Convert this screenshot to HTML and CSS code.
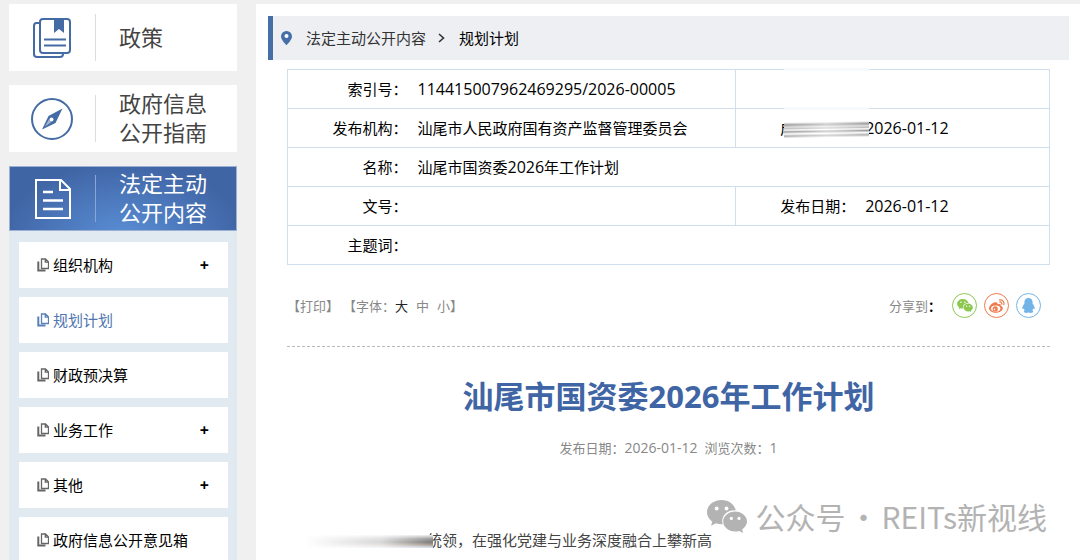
FILE: index.html
```html
<!DOCTYPE html>
<html lang="zh-CN">
<head>
    <meta charset="UTF-8">
    <meta name="viewport" content="width=device-width, initial-scale=1.0">
    <title>汕尾市国资委2026年工作计划</title>
    <link rel="stylesheet" href="styles.css">
</head>
<body>
    <svg class="sprite" aria-hidden="true">
        <symbol id="icon-copy" viewBox="0 0 12 14">
            <path d="M4.500 1h4l3 3v6.500h-7z M8.300 1v3.200h3.200" fill="none" stroke="currentColor" stroke-width="1.300"/>
            <path d="M1.300 3.500v9h7.200" fill="none" stroke="currentColor" stroke-width="2"/>
        </symbol>
        <symbol id="icon-wechat" viewBox="0 0 40 33">
            <path d="M14.500 0C6.500 0 0 5.400 0 12.200c0 3.900 2.100 7.200 5.300 9.500L4 25.800l5-2.500c1.800.500 3.500.900 5.500.900h1.200c-.300-1-.500-2-.500-3.100 0-6.200 5.600-10.900 12.400-10.900h1.200C27.400 4.200 21.500 0 14.500 0z"/>
            <path d="M40 21.600c0-5.500-5.500-10-11.900-10s-11.900 4.500-11.900 10 5.400 10 11.900 10c1.400 0 2.800-.300 4.100-.700l4 2.100-1.100-3.600c2.900-1.900 4.900-4.700 4.900-7.800z"/>
            <g fill="#fff"><circle cx="9.700" cy="8.500" r="1.900"/><circle cx="19.500" cy="8.500" r="1.900"/><circle cx="24.300" cy="18.400" r="1.600"/><circle cx="32" cy="18.400" r="1.600"/></g>
        </symbol>
    </svg>

    <div class="wrap">
        <aside class="side">
            <nav aria-label="信息公开">
                <a class="card" href="#">
                    <span class="card-icon">
                        <svg width="40" height="42" viewBox="0 0 40 42" fill="none" stroke="#456ba5" stroke-width="2">
                            <path d="M7 6H4.500Q2 6 2 9v28q0 3 3 3h23q3 0 3-3"/>
                            <rect x="8" y="2" width="30" height="34" rx="3" fill="#fff"/>
                            <path d="M22 2h10v14l-5-4-5 4z" fill="#456ba5" stroke="none"/>
                            <path d="M12 22.500h22M12 28.500h22"/>
                        </svg>
                    </span>
                    <span class="card-text">政策</span>
                </a>
                <a class="card" href="#">
                    <span class="card-icon">
                        <svg width="42" height="42" viewBox="0 0 42 42">
                            <circle cx="21" cy="21" r="20" fill="none" stroke="#456ba5" stroke-width="2"/>
                            <path d="M31.500 10.500L24.500 25 11 31.500 17.500 18z" fill="#456ba5"/>
                            <path d="M13.800 28.800l4-7.300 2.300 2.800z" fill="#fff" opacity=".5"/>
                            <circle cx="20.500" cy="21.500" r="2" fill="#fff"/>
                        </svg>
                    </span>
                    <span class="card-text">政府信息<br>公开指南</span>
                </a>
                <a class="card active" href="#">
                    <span class="card-icon">
                        <svg width="36" height="40" viewBox="0 0 36 40" fill="none" stroke="#fff" stroke-width="2">
                            <path d="M1 1h25l9 9v29H1z M25 1v10h10"/>
                            <path d="M8 13h10M8 21.500h20M8 30h20" stroke-width="2.500"/>
                        </svg>
                    </span>
                    <span class="card-text">法定主动<br>公开内容</span>
                </a>
                <ul class="sub-list">
                    <li><a href="#"><svg class="copy"><use href="#icon-copy"/></svg>组织机构</a><button aria-label="展开组织机构">+</button></li>
                    <li class="current"><a href="#"><svg class="copy"><use href="#icon-copy"/></svg>规划计划</a></li>
                    <li><a href="#"><svg class="copy"><use href="#icon-copy"/></svg>财政预决算</a></li>
                    <li><a href="#"><svg class="copy"><use href="#icon-copy"/></svg>业务工作</a><button aria-label="展开业务工作">+</button></li>
                    <li><a href="#"><svg class="copy"><use href="#icon-copy"/></svg>其他</a><button aria-label="展开其他">+</button></li>
                    <li><a href="#"><svg class="copy"><use href="#icon-copy"/></svg>政府信息公开意见箱</a></li>
                </ul>
            </nav>
        </aside>

        <main class="main">
            <nav class="crumb" aria-label="当前位置">
                <svg width="11" height="14" viewBox="0 0 11 14"><path d="M5.500 0A5.400 5.400 0 0 0 0 5.400C0 9 5.500 14 5.500 14S11 9 11 5.400A5.400 5.400 0 0 0 5.500 0z" fill="#466fa8"/><circle cx="5.500" cy="5" r="2" fill="#fff"/></svg>
                <a href="#">法定主动公开内容</a>
                <svg width="7" height="10" viewBox="0 0 7 10"><path d="M1 1l4.500 4L1 9" fill="none" stroke="#333" stroke-width="1.600"/></svg>
                <a class="here" href="#">规划计划</a>
            </nav>

            <div class="content">
                <table class="info">
                    <colgroup>
                        <col class="col-label"><col class="col-wide"><col class="col-label"><col>
                    </colgroup>
                    <tr>
                        <th>索引号：</th>
                        <td><span class="num">114415007962469295/2026-00005</span></td>
                        <th><span class="fade"></span></th>
                        <td></td>
                    </tr>
                    <tr>
                        <th>发布机构：</th>
                        <td>汕尾市人民政府国有资产监督管理委员会</td>
                        <th>成文日期：<span class="fade"></span><span class="smudge"></span></th>
                        <td><span class="num">2026-01-12</span></td>
                    </tr>
                    <tr>
                        <th>名称：</th>
                        <td colspan="3">汕尾市国资委<span class="num">2026</span>年工作计划</td>
                    </tr>
                    <tr>
                        <th>文号：</th>
                        <td></td>
                        <th>发布日期：</th>
                        <td><span class="num">2026-01-12</span></td>
                    </tr>
                    <tr>
                        <th>主题词：</th>
                        <td colspan="3"></td>
                    </tr>
                </table>

                <div class="tools">
                    <div class="tools-left">
                        <button>【打印】</button>
                        <span>【字体：<button class="on">大</button><button>中</button><button>小</button>】</span>
                    </div>
                    <div class="share">
                        <span>分享到<b>：</b></span>
                        <a class="wechat" href="#" aria-label="微信"><svg width="16" height="13"><use href="#icon-wechat"/></svg></a>
                        <a class="weibo" href="#" aria-label="微博">
                            <svg width="16" height="14" viewBox="0 0 16 14">
                                <path d="M6 3.200C3.500 3.500 0 6.800 0 9.300 0 12 3.300 13.800 6.800 13.800c4 0 7-2.200 7-4.500 0-1.500-1.200-2.200-2.200-2.500.500-1.600-.400-2.500-3-1.500C8.900 3.900 7.800 3 6 3.200z" fill="currentColor"/>
                                <ellipse cx="6.700" cy="9.600" rx="4.700" ry="3.100" fill="#fff"/>
                                <circle cx="6.200" cy="9.900" r="2.600" fill="currentColor"/>
                                <circle cx="5.500" cy="10.400" r=".8" fill="#fff"/>
                                <path d="M10.500.900c3-.500 5.100 2 4.300 4.700M10.700 3c1.400-.200 2.400.900 2 2.200" fill="none" stroke="currentColor" stroke-width="1.200" stroke-linecap="round"/>
                            </svg>
                        </a>
                        <a class="qq" href="#" aria-label="QQ">
                            <svg width="13" height="15" viewBox="0 0 13 15"><path d="M6.500 0C3.900 0 2.400 1.900 2.400 4.200v1.500C1.300 7.100.300 8.600.300 10.300c0 1 .500 1.300 1.500.100.200.800.500 1.400 1 1.900-.700.300-1 .700-1 1.200 0 1 1.300 1.400 2.800 1.400.9 0 1.500-.200 1.900-.600.400.400 1 .600 1.900.600 1.500 0 2.800-.4 2.800-1.400 0-.500-.3-.9-1-1.200.5-.5.800-1.100 1-1.900 1 1.200 1.500.900 1.500-.1 0-1.700-1-3.200-2.100-4.600V4.200C10.600 1.900 9.100 0 6.500 0z" fill="currentColor"/></svg>
                        </a>
                    </div>
                </div>

                <article>
                    <h1>汕尾市国资委2026年工作计划</h1>
                    <p class="meta">发布日期：<span class="meta-num">2026-01-12</span><span class="views">浏览次数：<span class="meta-num">1</span></span></p>
                    <p class="text"><span class="text-smudge"></span>统领，在强化党建与业务深度融合上攀新高</p>
                </article>
            </div>
        </main>
    </div>

    <div class="watermark">
        <svg width="40" height="33"><use href="#icon-wechat"/></svg>
        <span>公众号</span><span>·</span><span>REITs新视线</span>
    </div>
</body>
</html>
```
FILE: styles.css
```css
*{padding:0; margin:0; list-style:none; box-sizing:border-box;}
:root{
    --blue:#4065a5;
    --line:#cfdfee;
    --page:#f0f0f0;
}
body{
    background:var(--page); color:#000;
    font:15px/20px "Open Sans","Noto Sans CJK SC",sans-serif;
    height:100vh; overflow:hidden;
}
a{color:inherit; text-decoration:none;}
button{border:0; background:none; font:inherit; color:inherit; cursor:pointer;}
svg{display:block; flex:none;}
.sprite{position:absolute; width:0; height:0;}

.wrap{
    display:grid; grid-template-columns:228px 1fr;
    gap:19px; padding:4px 0 0 9px;
}

/* side */
.card{
    display:flex; align-items:center;
    height:67px; margin-bottom:14px;
    background:#fff; color:#444;
    font-size:22px; line-height:29px;
}
.card-icon{
    display:flex; align-items:center; justify-content:center;
    width:87px; height:47px;
    border-right:1px solid #ddd;
}
.card-text{padding:0 0 1px 23px;}
.card.active{
    height:65px; margin:0; border:1px solid #9bb0d3; color:#fff;
    background:radial-gradient(ellipse at 50% 110%,#5a8ed6,#4065a5 75%);
}
.active .card-icon{width:86px; border-color:#8ba6d2;}

.sub-list{
    display:flex; flex-direction:column; gap:9px;
    padding:11px 9px 10px 10px; background:#e2eaf1;
}
.sub-list li{
    display:flex; align-items:center; justify-content:space-between;
    height:46px; padding:0 19px 0 18px; background:#fff;
}
.sub-list a{display:flex; align-items:center; gap:4px;}
.sub-list button{font-weight:bold; font-size:16px;}
.sub-list .current{color:#4f76b0;}
.copy{width:12px; height:14px; color:#666;}
.current .copy{color:#5a80b8;}

/* main */
.main{background:#fff; padding:12px 11px 0 12px; height:100vh;}
.crumb{
    display:flex; align-items:center;
    height:44px; padding-left:8px;
    border-left:5px solid #466fa8; background:#edeff3; color:#333;
}
.crumb a{margin:0 12px 0 14px;}
.crumb .here{color:#000;}

.content{padding:9px 19px 0;}
.info{
    width:100%; table-layout:fixed; border-collapse:collapse;
    border:1px solid var(--line);
}
.col-label{width:120px;}
.col-wide{width:43%;}
.info tr{height:39px; border-bottom:1px solid var(--line);}
.info th{position:relative; font-weight:normal; text-align:right;}
.info th:nth-child(3){border-left:1px solid var(--line);}
.info td{padding-left:10px;}
.num{font-size:16px;}
.fade{
    position:absolute; left:48px; top:-2px;
    width:85px; height:3px; background:#f7fafd;
}
.smudge{
    position:absolute; left:48px; top:10px; z-index:1;
    width:85px; height:20px;
    background:
        linear-gradient(90deg,transparent,rgba(255,255,255,.5) 50%,transparent),
        linear-gradient(179deg,#fff 16%,#999 28%,#ddd 38%,#bbb 46%,#fff 52%,#999 60%,#fff 70%,#aaa 80%,#fff 90%);
}

.tools{
    display:flex; align-items:center; justify-content:space-between;
    height:82px; border-bottom:1px dashed #bbb;
    font-size:13px; color:#888;
}
.tools-left{display:flex; gap:4px;}
.tools-left span button{margin-right:8px;}
.tools-left span button:last-child{margin-right:0;}
.tools-left .on{color:#222;}
.share{display:flex; align-items:center; gap:7px; padding-right:9px;}
.share span{padding-right:4px;}
.share b{color:#000;}
.share a{
    display:flex; align-items:center; justify-content:center;
    width:25px; height:25px; border:1px solid; border-radius:50%;
}
.wechat{color:#8cc850; fill:#8cc850;}
.weibo{color:#ef7a4c;}
.qq{color:#72b4e8;}

article h1{
    padding-top:28px; text-align:center;
    font-size:31px; line-height:42px; color:var(--blue);
}
.meta{
    display:flex; justify-content:center;
    padding-top:21px; font-size:13px; color:#888;
}
.meta-num{font-size:14px;}
.views{padding-left:7px;}
.text{padding-top:72px; color:#444;}
.text-smudge{
    display:inline-block; vertical-align:middle; position:relative;
    width:128px; height:13px; margin:0 -6px 0 18px;
    background:linear-gradient(90deg,#fff,rgba(255,255,255,.7) 60%,rgba(255,255,255,0)),linear-gradient(#eee,#999 30%,#777 55%,#a99c92 75%,#dde8f5);
}

.watermark{
    position:absolute; right:33px; bottom:22px;
    display:flex; align-items:center; gap:3px;
    font:30px/44px "Noto Sans CJK SC",sans-serif; color:#b3b3b3; fill:#b3b3b3;
}
.watermark svg{margin-right:5px;}
```
